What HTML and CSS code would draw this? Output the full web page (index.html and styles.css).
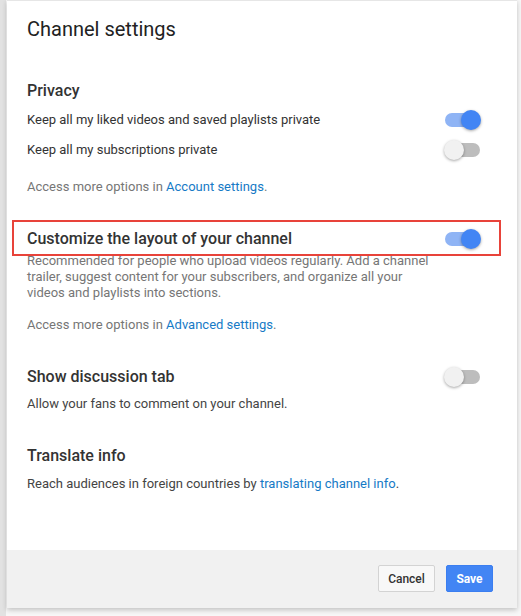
FILE: index.html
```
<!DOCTYPE html>
<html>
<head>
<meta charset="utf-8">
<link rel="stylesheet" href="styles.css">
</head>
<body>
<div class="page">
  <div class="dialog">
    <div class="content">
      <h1 class="title">Channel settings</h1>

      <h2 class="heading heading-privacy">Privacy</h2>
      <div class="row row-first">
        <span class="row-text">Keep all my liked videos and saved playlists private</span>
        <span class="toggle on"><span class="track"></span><span class="knob"></span></span>
      </div>
      <div class="row">
        <span class="row-text">Keep all my subscriptions private</span>
        <span class="toggle"><span class="track"></span><span class="knob"></span></span>
      </div>
      <p class="muted access-account">Access more options in <a class="link" href="#">Account settings</a>.</p>

      <div class="section-customize">
        <div class="heading-row">
          <h2 class="heading">Customize the layout of your channel</h2>
          <span class="toggle on"><span class="track"></span><span class="knob"></span></span>
        </div>
        <div class="highlight"></div>
      </div>
      <p class="muted desc">Recommended for people who upload videos regularly. Add a channel trailer, suggest content for your subscribers, and organize all your videos and playlists into sections.</p>
      <p class="muted access-advanced">Access more options in <a class="link" href="#">Advanced settings</a>.</p>

      <div class="heading-row heading-discussion">
        <h2 class="heading">Show discussion tab</h2>
        <span class="toggle"><span class="track"></span><span class="knob"></span></span>
      </div>
      <p class="plain allow">Allow your fans to comment on your channel.</p>

      <h2 class="heading heading-translate">Translate info</h2>
      <p class="plain reach">Reach audiences in foreign countries by <a class="link" href="#">translating channel info</a>.</p>
    </div>
    <div class="footer">
      <button class="btn btn-cancel">Cancel</button>
      <button class="btn btn-save">Save</button>
    </div>
  </div>
</div>
</body>
</html>
```
FILE: styles.css
```
* { box-sizing: border-box; }
html, body { margin: 0; padding: 0; }
body {
  background: #f4f4f4;
  font-family: Roboto, "Liberation Sans", Arial, sans-serif;
  width: 521px;
  height: 616px;
  overflow: hidden;
}
.page {
  padding-left: 7px;
  background: linear-gradient(to right, #e2e2e2 0, #e2e2e2 6px, #f7f7f7 6px);
  height: 616px;
}
.dialog {
  width: 510px;
  height: 608px;
  background: #fff;
  border-top: 1px solid #e6e6e6;
  box-shadow: 0 2px 5px rgba(0,0,0,0.22);
  display: flex;
  flex-direction: column;
}
.content {
  flex: 1;
  padding: 16px 36px 0 20px;
}
.title {
  margin: 0;
  font-size: 20px;
  line-height: 24px;
  font-weight: 400;
  color: #222;
}
.heading {
  margin: 0;
  font-size: 16px;
  line-height: 20px;
  font-weight: 500;
  color: #333;
}
.heading-privacy { margin-top: 40px; }
.row {
  height: 30px;
  display: flex;
  align-items: center;
  justify-content: space-between;
  font-size: 13px;
  line-height: 16px;
  color: #333;
}
.row-first { margin-top: 4px; }
.muted, .plain {
  margin: 0;
  font-size: 13px;
  line-height: 16px;
}
.muted { color: #767676; }
.plain { color: #444; }
.link { color: #167ac6; text-decoration: none; }
.access-account { margin-top: 14px; }
.section-customize {
  position: relative;
  margin-top: 34px;
}
.heading-row {
  display: flex;
  align-items: center;
  justify-content: space-between;
  height: 20px;
}
.highlight {
  position: absolute;
  left: -15px;
  right: -20px;
  top: -9px;
  bottom: -7px;
  border: 2px solid #e8433a;
  pointer-events: none;
}
.desc {
  margin-top: 4px;
  width: 405px;
}
.access-advanced { margin-top: 16px; }
.heading-discussion { margin-top: 34px; }
.allow { margin-top: 9px; }
.heading-translate { margin-top: 34px; }
.reach { margin-top: 10px; }

.toggle {
  position: relative;
  width: 37px;
  height: 20px;
  flex: none;
}
.track {
  position: absolute;
  left: 1px;
  right: 1px;
  top: 3px;
  height: 14px;
  border-radius: 7px;
  background: #bdbdbd;
}
.knob {
  position: absolute;
  top: 0;
  left: 0;
  width: 20px;
  height: 20px;
  border-radius: 50%;
  background: #f1f1f1;
  box-shadow: 0 1px 3px rgba(0,0,0,0.35);
}
.toggle.on .track { background: #8fb4f5; }
.toggle.on .knob {
  left: 17px;
  background: #4285f4;
}

.footer {
  height: 58px;
  background: #f1f1f1;
  display: flex;
  justify-content: flex-end;
  align-items: flex-start;
  padding: 15px 24px 0 0;
  gap: 11px;
}
.btn {
  height: 27px;
  border-radius: 2px;
  font-family: Roboto, "Liberation Sans", Arial, sans-serif;
  font-size: 12px;
  padding: 0;
  cursor: pointer;
}
.btn-cancel {
  width: 57px;
  background: #f8f8f8;
  border: 1px solid #d3d3d3;
  color: #333;
  font-weight: 500;
}
.btn-save {
  width: 47px;
  background: #4285f4;
  border: 1px solid #3b7ef0;
  color: #fff;
  font-weight: 700;
}
```
